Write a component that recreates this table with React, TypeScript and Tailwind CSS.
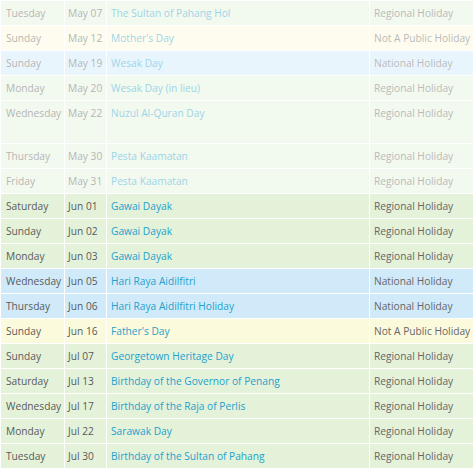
type Kind = "regional" | "national" | "none";

type Holiday = {
  day: string;
  date: string;
  name: string;
  kind: Kind;
  past?: boolean;
  tall?: boolean;
};

const holidays: Holiday[] = [
  { day: "Tuesday", date: "May 07", name: "The Sultan of Pahang Hol", kind: "regional", past: true },
  { day: "Sunday", date: "May 12", name: "Mother's Day", kind: "none", past: true },
  { day: "Sunday", date: "May 19", name: "Wesak Day", kind: "national", past: true },
  { day: "Monday", date: "May 20", name: "Wesak Day (in lieu)", kind: "regional", past: true },
  { day: "Wednesday", date: "May 22", name: "Nuzul Al-Quran Day", kind: "regional", past: true, tall: true },
  { day: "Thursday", date: "May 30", name: "Pesta Kaamatan", kind: "regional", past: true },
  { day: "Friday", date: "May 31", name: "Pesta Kaamatan", kind: "regional", past: true },
  { day: "Saturday", date: "Jun 01", name: "Gawai Dayak", kind: "regional" },
  { day: "Sunday", date: "Jun 02", name: "Gawai Dayak", kind: "regional" },
  { day: "Monday", date: "Jun 03", name: "Gawai Dayak", kind: "regional" },
  { day: "Wednesday", date: "Jun 05", name: "Hari Raya Aidilfitri", kind: "national" },
  { day: "Thursday", date: "Jun 06", name: "Hari Raya Aidilfitri Holiday", kind: "national" },
  { day: "Sunday", date: "Jun 16", name: "Father's Day", kind: "none" },
  { day: "Sunday", date: "Jul 07", name: "Georgetown Heritage Day", kind: "regional" },
  { day: "Saturday", date: "Jul 13", name: "Birthday of the Governor of Penang", kind: "regional" },
  { day: "Wednesday", date: "Jul 17", name: "Birthday of the Raja of Perlis", kind: "regional" },
  { day: "Monday", date: "Jul 22", name: "Sarawak Day", kind: "regional" },
  { day: "Tuesday", date: "Jul 30", name: "Birthday of the Sultan of Pahang", kind: "regional" },
];

const kindLabel: Record<Kind, string> = {
  regional: "Regional Holiday",
  national: "National Holiday",
  none: "Not A Public Holiday",
};

const kindBg: Record<Kind, string> = {
  regional: "bg-[#e4f2da]",
  national: "bg-[#d0eafa]",
  none: "bg-[#fcfadc]",
};

export default function App() {
  return (
    <div className="h-[469px] w-[474px] overflow-hidden bg-white font-['Open_Sans',sans-serif] text-[10.2px]">
      <table className="w-full table-fixed border-collapse">
        <colgroup>
          <col className="w-[64px]" />
          <col className="w-[42px]" />
          <col className="w-[263px]" />
          <col />
        </colgroup>
        <tbody>
          {holidays.map((h, i) => (
            <tr
              key={i}
              className={`${kindBg[h.kind]} ${h.past ? "opacity-45" : ""} ${h.tall ? "h-[43px]" : "h-[25px]"}`}
            >
              <td className="whitespace-nowrap border border-white px-[5px] pt-[5px] align-top leading-[15px] text-[#5a5a5a]">
                {h.day}
              </td>
              <td className="whitespace-nowrap border border-white px-[3px] pt-[5px] align-top leading-[15px] text-[#5a5a5a]">
                {h.date}
              </td>
              <td className="whitespace-nowrap border border-white px-[4px] pt-[5px] align-top leading-[15px] text-[#23a1cc]">
                {h.name}
              </td>
              <td className="whitespace-nowrap border border-white px-[4px] pt-[5px] align-top leading-[15px] text-[#666]">
                {kindLabel[h.kind]}
              </td>
            </tr>
          ))}
        </tbody>
      </table>
    </div>
  );
}
